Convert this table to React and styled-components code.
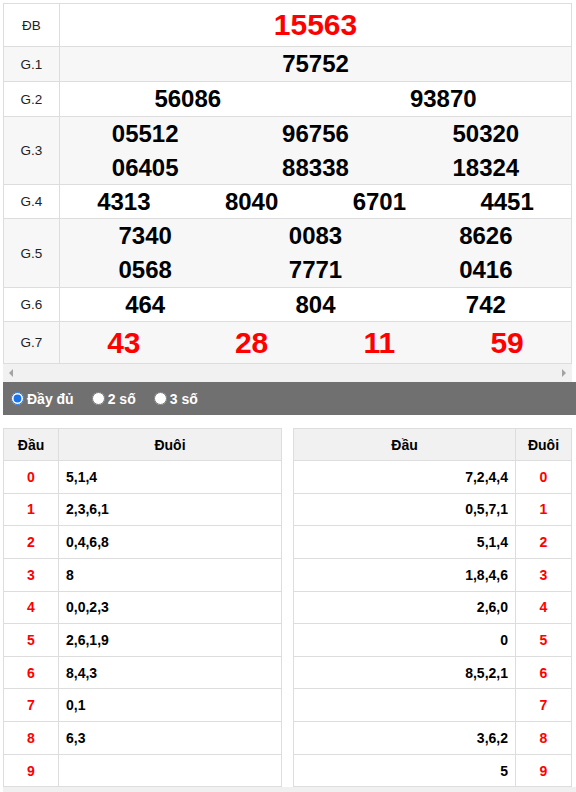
import React from "react";
import styled, { createGlobalStyle } from "styled-components";

const Global = createGlobalStyle`
  html, body { margin: 0; padding: 0; background: #fff; }
  body { font-family: "Liberation Sans", Arial, sans-serif; color: #000; }
`;

const Page = styled.div`
  padding: 3px 0 0 3px;
  width: 573px;
`;

const Board = styled.div`
  width: 569px;
  box-sizing: border-box;
  border: 1px solid #ddd;
  border-bottom: none;
`;

const Row = styled.div`
  display: flex;
  background: ${(p) => (p.$alt ? "#f7f7f7" : "#fff")};
  border-bottom: 1px solid #ddd;
`;

const Label = styled.div`
  flex: none;
  width: 55px;
  border-right: 1px solid #ddd;
  display: flex;
  align-items: center;
  justify-content: center;
  font-size: 13.5px;
  color: #222;
`;

const Values = styled.div`
  flex: 1;
  display: grid;
  grid-template-columns: repeat(${(p) => p.$cols}, 1fr);
`;

const Num = styled.div`
  text-align: center;
  font-weight: bold;
  font-size: ${(p) => (p.$big ? "30px" : "24px")};
  line-height: ${(p) => p.$lh || "34px"};
  color: ${(p) => (p.$red ? "#f00" : "#000")};
`;

const Scroll = styled.div`
  width: 569px;
  height: 18px;
  background: #f1f1f1;
  display: flex;
  align-items: center;
  justify-content: space-between;
  padding: 0 6px;
  box-sizing: border-box;
`;

const Arrow = styled.div`
  width: 0;
  height: 0;
  border-top: 4px solid transparent;
  border-bottom: 4px solid transparent;
  ${(p) =>
    p.$dir === "left"
      ? "border-right: 4px solid #a3a3a3;"
      : "border-left: 4px solid #a3a3a3;"}
`;

const Bar = styled.div`
  background: #707070;
  height: 33px;
  display: flex;
  align-items: center;
  padding-left: 3px;
`;

const Opt = styled.label`
  display: flex;
  align-items: center;
  color: #fff;
  font-weight: bold;
  font-size: 14px;
  margin-right: 13px;
  input {
    margin: 0 3px 0 5px;
    width: 13px;
    height: 13px;
    accent-color: #1a73e8;
  }
`;

const Loto = styled.div`
  display: flex;
  gap: 11px;
  width: 569px;
  margin-top: 13px;
`;

const LTable = styled.div`
  flex: 1;
  border: 1px solid #ddd;
  border-bottom: none;
`;

const LRow = styled.div`
  display: grid;
  grid-template-columns: ${(p) => (p.$right ? "1fr 56px" : "55px 1fr")};
  height: ${(p) => (p.$head ? "32px" : "32.65px")};
  box-sizing: border-box;
  border-bottom: 1px solid #ddd;
  background: ${(p) => (p.$head ? "#f1f1f1" : "#fff")};
  font-size: 14px;
  font-weight: bold;
`;

const Cell = styled.div`
  display: flex;
  align-items: center;
  justify-content: ${(p) => p.$align || "center"};
  padding: 0 ${(p) => (p.$align ? "7px" : "0")};
  color: ${(p) => (p.$red ? "#f00" : "#000")};
  ${(p) => p.$bl && "border-left: 1px solid #ddd;"}
  ${(p) => p.$br && "border-right: 1px solid #ddd;"}
`;

const Footer = styled.div`
  height: 6px;
  background: #f0f0f0;
`;

const prizes = [
  { l: "ĐB", cols: 1, nums: ["15563"], red: true, big: true, lh: "42px" },
  { l: "G.1", cols: 1, nums: ["75752"] },
  { l: "G.2", cols: 2, nums: ["56086", "93870"] },
  { l: "G.3", cols: 3, nums: ["05512", "96756", "50320", "06405", "88338", "18324"], lh: "33.5px" },
  { l: "G.4", cols: 4, nums: ["4313", "8040", "6701", "4451"], lh: "33px" },
  { l: "G.5", cols: 3, nums: ["7340", "0083", "8626", "0568", "7771", "0416"], lh: "34px" },
  { l: "G.6", cols: 3, nums: ["464", "804", "742"], lh: "33px" },
  { l: "G.7", cols: 4, nums: ["43", "28", "11", "59"], red: true, big: true, lh: "41px" },
];

const dau = ["5,1,4", "2,3,6,1", "0,4,6,8", "8", "0,0,2,3", "2,6,1,9", "8,4,3", "0,1", "6,3", ""];
const duoi = ["7,2,4,4", "0,5,7,1", "5,1,4", "1,8,4,6", "2,6,0", "0", "8,5,2,1", "", "3,6,2", "5"];

export default function App() {
  return (
    <Page>
      <Global />
      <Board>
        {prizes.map((p, i) => (
          <Row key={p.l} $alt={i % 2 === 1}>
            <Label>{p.l}</Label>
            <Values $cols={p.cols}>
              {p.nums.map((n, j) => (
                <Num key={j} $red={p.red} $big={p.big} $lh={p.lh}>
                  {n}
                </Num>
              ))}
            </Values>
          </Row>
        ))}
      </Board>
      <Scroll>
        <Arrow $dir="left" />
        <Arrow $dir="right" />
      </Scroll>
      <Bar>
        <Opt>
          <input type="radio" name="mode" defaultChecked />
          Đầy đủ
        </Opt>
        <Opt>
          <input type="radio" name="mode" />2 số
        </Opt>
        <Opt>
          <input type="radio" name="mode" />3 số
        </Opt>
      </Bar>
      <Loto>
        <LTable>
          <LRow $head>
            <Cell $br>Đầu</Cell>
            <Cell>Đuôi</Cell>
          </LRow>
          {dau.map((v, i) => (
            <LRow key={i}>
              <Cell $br $red>{i}</Cell>
              <Cell $align="flex-start">{v}</Cell>
            </LRow>
          ))}
        </LTable>
        <LTable>
          <LRow $head $right>
            <Cell>Đầu</Cell>
            <Cell $bl>Đuôi</Cell>
          </LRow>
          {duoi.map((v, i) => (
            <LRow key={i} $right>
              <Cell $align="flex-end">{v}</Cell>
              <Cell $bl $red>{i}</Cell>
            </LRow>
          ))}
        </LTable>
      </Loto>
      <Footer />
    </Page>
  );
}
